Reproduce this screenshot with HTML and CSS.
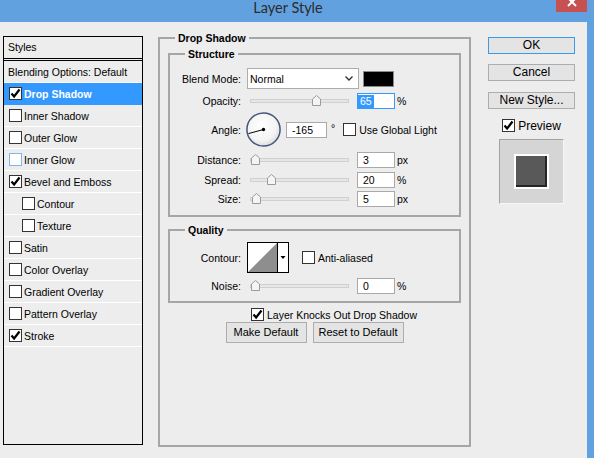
FILE: index.html
```html
<!doctype html>
<html lang="en">
<head>
  <meta charset="UTF-8"/>
  <meta content="width=device-width, initial-scale=1" name="viewport">
  <title>Layer Style</title>
  <link rel="stylesheet" href="styles.css">
</head>
<body>
<div class="dialog">
  <div class="titlebar">
    <div class="title">Layer Style</div>
    <div class="close">
      <svg width="31" height="12" viewBox="0 0 31 12"><path d="M12 -2L20 6M20 -2L12 6" stroke="#fff" stroke-width="2"/></svg>
    </div>
  </div>

  <div class="content">
    <!-- effect list -->
    <div class="styles-list">
      <div class="styles-head">Styles</div>
      <ul class="styles-items">
        <li class="plain">Blending Options: Default</li>
        <li class="selected"><span class="cb"><svg width="11" height="11" viewBox="0 0 11 11"><path d="M1.5 5.5l2.6 3L9.5 1.5" fill="none" stroke="#000" stroke-width="2.2"/></svg></span>Drop Shadow</li>
        <li><span class="cb"></span>Inner Shadow</li>
        <li><span class="cb"></span>Outer Glow</li>
        <li><span class="cb hover"></span>Inner Glow</li>
        <li><span class="cb"><svg width="11" height="11" viewBox="0 0 11 11"><path d="M1.5 5.5l2.6 3L9.5 1.5" fill="none" stroke="#000" stroke-width="2.2"/></svg></span>Bevel and Emboss</li>
        <li class="sub"><span class="cb"></span>Contour</li>
        <li class="sub"><span class="cb"></span>Texture</li>
        <li><span class="cb"></span>Satin</li>
        <li><span class="cb"></span>Color Overlay</li>
        <li><span class="cb"></span>Gradient Overlay</li>
        <li><span class="cb"></span>Pattern Overlay</li>
        <li><span class="cb"><svg width="11" height="11" viewBox="0 0 11 11"><path d="M1.5 5.5l2.6 3L9.5 1.5" fill="none" stroke="#000" stroke-width="2.2"/></svg></span>Stroke</li>
      </ul>
    </div>

    <!-- settings -->
    <fieldset class="group effect">
      <legend>Drop Shadow</legend>

      <fieldset class="group structure">
        <legend>Structure</legend>

        <div class="row blend">
          <span class="lbl">Blend Mode:</span>
          <div class="select">
            <span>Normal</span>
            <svg width="8" height="5" viewBox="0 0 8 5"><path d="M.5.5L4 4 7.5.5" fill="none" stroke="#333" stroke-width="1.4"/></svg>
          </div>
          <span class="swatch"></span>
        </div>

        <div class="row opacity">
          <span class="lbl">Opacity:</span>
          <div class="slider"><span class="thumb" style="left:61px"><svg width="9" height="11" viewBox="0 0 9 11"><path d="M.5 10.5V4L4.5.5 8.5 4v6.5z" fill="#f4f4f4" stroke="#9b9b9b"/></svg></span></div>
          <span class="field focus"><span class="sel">65</span></span>
          <span class="unit">%</span>
        </div>

        <div class="row angle">
          <span class="lbl">Angle:</span>
          <span class="dial">
            <svg width="35" height="35" viewBox="0 0 35 35">
              <defs>
                <radialGradient id="dialFill" cx="45%" cy="40%" r="62%">
                  <stop offset="0" stop-color="#ffffff"/>
                  <stop offset="0.7" stop-color="#f3f3f3"/>
                  <stop offset="1" stop-color="#d9d9d9"/>
                </radialGradient>
              </defs>
              <circle cx="17.5" cy="17.5" r="16.6" fill="url(#dialFill)" stroke="#46557c" stroke-width="1.5"/>
              <path d="M17.5 17.5L2.4 21.6" stroke="#000" stroke-width="1"/>
              <circle cx="17.5" cy="17.5" r="1.7" fill="#000"/>
            </svg>
          </span>
          <span class="field wide">-165</span>
          <span class="deg">°</span>
          <span class="cb"></span>
          <span class="cb-text">Use Global Light</span>
        </div>

        <div class="row distance">
          <span class="lbl">Distance:</span>
          <div class="slider"><span class="thumb" style="left:0"><svg width="9" height="11" viewBox="0 0 9 11"><path d="M.5 10.5V4L4.5.5 8.5 4v6.5z" fill="#f4f4f4" stroke="#9b9b9b"/></svg></span></div>
          <span class="field">3</span>
          <span class="unit">px</span>
        </div>

        <div class="row spread">
          <span class="lbl">Spread:</span>
          <div class="slider"><span class="thumb" style="left:16px"><svg width="9" height="11" viewBox="0 0 9 11"><path d="M.5 10.5V4L4.5.5 8.5 4v6.5z" fill="#f4f4f4" stroke="#9b9b9b"/></svg></span></div>
          <span class="field">20</span>
          <span class="unit">%</span>
        </div>

        <div class="row size">
          <span class="lbl">Size:</span>
          <div class="slider"><span class="thumb" style="left:1px"><svg width="9" height="11" viewBox="0 0 9 11"><path d="M.5 10.5V4L4.5.5 8.5 4v6.5z" fill="#f4f4f4" stroke="#9b9b9b"/></svg></span></div>
          <span class="field">5</span>
          <span class="unit">px</span>
        </div>
      </fieldset>

      <fieldset class="group quality">
        <legend>Quality</legend>

        <div class="row contour">
          <span class="lbl">Contour:</span>
          <span class="contour-pick">
            <svg width="42" height="31" viewBox="0 0 42 31">
              <rect x=".5" y=".5" width="41" height="30" fill="#fff" stroke="#000"/>
              <path d="M1 30L30 1V30Z" fill="#8e8e8e"/>
              <path d="M30.5 1V30" stroke="#000"/>
              <path d="M33.5 14h5l-2.5 3z" fill="#000"/>
            </svg>
          </span>
          <span class="cb"></span>
          <span class="cb-text">Anti-aliased</span>
        </div>

        <div class="row noise">
          <span class="lbl">Noise:</span>
          <div class="slider"><span class="thumb" style="left:0"><svg width="9" height="11" viewBox="0 0 9 11"><path d="M.5 10.5V4L4.5.5 8.5 4v6.5z" fill="#f4f4f4" stroke="#9b9b9b"/></svg></span></div>
          <span class="field">0</span>
          <span class="unit">%</span>
        </div>
      </fieldset>

      <div class="knock">
        <span class="cb"><svg width="11" height="11" viewBox="0 0 11 11"><path d="M1.5 5.5l2.6 3L9.5 1.5" fill="none" stroke="#000" stroke-width="2.2"/></svg></span>
        <span class="cb-text">Layer Knocks Out Drop Shadow</span>
      </div>

      <div class="defaults">
        <span class="btn make">Make Default</span>
        <span class="btn reset">Reset to Default</span>
      </div>
    </fieldset>

    <!-- dialog actions -->
    <div class="actions">
      <span class="btn primary">OK</span>
      <span class="btn">Cancel</span>
      <span class="btn new">New Style...</span>
      <div class="preview-toggle">
        <span class="cb"><svg width="11" height="11" viewBox="0 0 11 11"><path d="M1.5 5.5l2.6 3L9.5 1.5" fill="none" stroke="#000" stroke-width="2.2"/></svg></span>
        <span class="cb-text">Preview</span>
      </div>
      <div class="preview">
        <div class="preview-square"></div>
      </div>
    </div>
  </div>
</div>
</body>
</html>
```

FILE: styles.css
```css
*, *:before {
  box-sizing: border-box;
}

body {
  margin: 0;
  background: #ededed;
  font-family: "Liberation Sans", Arial, sans-serif;
  font-size: 10.5px;
  color: #000;
}

.dialog {
  width: 594px;
  height: 458px;
  overflow: hidden;
  background: #ededed;
  border-right: 7px solid #62a1e0;
}

.titlebar {
  display: flex;
  height: 22px;
  background: #62a1e0;
}

.titlebar .title {
  flex: 1;
  padding-left: 20px;
  text-align: center;
  font-family: Lato, "Noto Sans", sans-serif;
  font-size: 14.5px;
  line-height: 16px;
  color: #2c2c2c;
}

.titlebar .close {
  width: 31px;
  height: 12px;
  background: #c75050;
}

.titlebar .close svg {
  display: block;
}

.content {
  display: flex;
  align-items: flex-start;
  padding: 10px 0 0 3px;
}

/* effect list */

.styles-list {
  width: 140px;
  height: 409px;
  margin-top: 4px;
  border: 1px solid #000;
}

.styles-head {
  height: 24px;
  padding-left: 4px;
  line-height: 21px;
  border-bottom: 3px double #000;
}

.styles-items {
  margin: 0;
  padding: 0;
  list-style: none;
}

.styles-items li {
  display: flex;
  align-items: center;
  height: 22px;
  padding-left: 5px;
  border-bottom: 1px solid #fff;
  white-space: nowrap;
}

.styles-items li.plain {
  padding-left: 4px;
}

.styles-items li.sub {
  padding-left: 18px;
}

.styles-items li.selected {
  background: #3399ff;
  border-bottom-color: #3399ff;
  color: #fff;
  font-weight: bold;
}

.cb {
  display: inline-flex;
  align-items: center;
  justify-content: center;
  flex: none;
  width: 13px;
  height: 13px;
  margin-right: 2px;
  background: #fff;
  border: 1px solid #333;
}

.cb svg {
  display: block;
}

.cb.hover {
  border-color: #7fb6ec;
}

/* settings */

.group {
  margin: 0;
  min-width: 0;
  border: 2px solid #a6a6a6;
}

.group legend {
  margin-left: 7px;
  padding: 0 3px;
  font-weight: bold;
  line-height: 12px;
}

.group .group legend {
  margin-left: 15px;
}

.effect {
  width: 313px;
  height: 415px;
  margin-left: 15px;
  padding: 4px 8px 0;
}

.structure {
  padding: 8px 0 8px;
}

.quality {
  margin-top: 7px;
  padding: 6px 0 7px;
}

.row {
  display: flex;
  align-items: center;
  white-space: nowrap;
}

.row .lbl {
  flex: none;
  width: 71px;
  text-align: right;
}

.row.blend {
  height: 21px;
  margin-bottom: 4px;
}

.row.opacity {
  height: 16px;
  margin-bottom: 3px;
}

.row.angle {
  height: 35px;
  margin-bottom: 5px;
}

.row.distance,
.row.spread,
.row.size,
.row.noise {
  height: 16px;
}

.row.distance {
  margin-bottom: 4px;
}

.row.spread {
  margin-bottom: 3px;
}

.row.contour {
  height: 31px;
  margin-bottom: 5px;
}

.select {
  display: flex;
  align-items: center;
  justify-content: space-between;
  width: 112px;
  height: 21px;
  margin-left: 6px;
  padding: 0 5px 0 2px;
  background: #fff;
  border: 1px solid #adadad;
}

.select svg {
  display: block;
}

.swatch {
  width: 31px;
  height: 16px;
  margin-left: 4px;
  background: #000;
  border: 1px solid #8a8a8a;
}

.slider {
  position: relative;
  flex: none;
  width: 99px;
  height: 4px;
  margin-left: 9px;
  background: #e6e6e6;
  border: 1px solid #d0d0d0;
}

.slider .thumb {
  position: absolute;
  top: -5px;
}

.slider .thumb svg {
  display: block;
}

.field {
  flex: none;
  width: 38px;
  height: 16px;
  margin-left: 8px;
  padding-left: 5px;
  line-height: 14px;
  background: #fff;
  border: 1px solid #a9a9a9;
}

.field.focus {
  padding-left: 0;
  border-color: #3399ff;
}

.field .sel {
  display: inline-block;
  padding: 0 2px;
  background: #3399ff;
  color: #fff;
  line-height: 13px;
}

.field.wide {
  width: 41px;
  margin-left: 5px;
}

.unit {
  margin-left: 2px;
}

.dial {
  flex: none;
  margin-left: 5px;
}

.dial svg {
  display: block;
}

.deg {
  align-self: flex-start;
  margin: 10px 0 0 4px;
}

.angle .cb {
  margin-left: 8px;
}

.cb-text {
  margin-left: 1px;
}

.contour-pick {
  flex: none;
  margin-left: 6px;
}

.contour-pick svg {
  display: block;
}

.contour .cb {
  margin-left: 13px;
}

.knock {
  display: flex;
  align-items: center;
  height: 13px;
  margin: 5px 0 0 83px;
  white-space: nowrap;
}

.defaults {
  display: flex;
  justify-content: center;
  gap: 6px;
  margin-top: 1px;
}

.btn {
  display: block;
  height: 17px;
  line-height: 15px;
  text-align: center;
  white-space: nowrap;
  background: #e4e4e4;
  border: 1px solid #adadad;
}

.defaults .btn {
  height: 21px;
  line-height: 19px;
  font-size: 11px;
}

.defaults .make {
  width: 81px;
}

.defaults .reset {
  width: 91px;
}

/* dialog actions */

.actions {
  display: flex;
  flex-direction: column;
  width: 87px;
  margin: 5px 0 0 17px;
  gap: 10px;
}

.actions .btn {
  font-size: 12px;
}

.actions .btn.primary {
  border-color: #3c9ae8;
}

.actions .btn.new {
  margin-top: 1px;
}

.preview-toggle {
  display: flex;
  align-items: center;
  justify-content: center;
  height: 13px;
  font-size: 12px;
}

.preview {
  display: flex;
  align-items: center;
  justify-content: center;
  width: 65px;
  height: 65px;
  margin: -3px auto 0;
  background: #d5d5d5;
  border-top: 1px solid #a3a3a3;
  border-left: 1px solid #a3a3a3;
  border-bottom: 1px solid #f6f6f6;
  border-right: 1px solid #f6f6f6;
}

.preview-square {
  width: 35px;
  height: 35px;
  background: #595959;
  border: 2px solid #fff;
  box-shadow: inset -2px -2px 0 #262626;
}
```
